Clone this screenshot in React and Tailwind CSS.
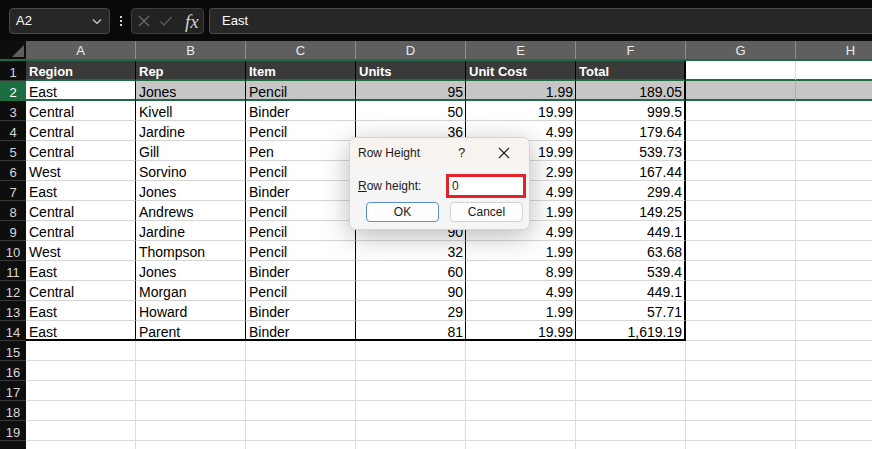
import React from "react";

const cols = ["A", "B", "C", "D", "E", "F", "G", "H"];
const data = [
  ["East", "Jones", "Pencil", "95", "1.99", "189.05"],
  ["Central", "Kivell", "Binder", "50", "19.99", "999.5"],
  ["Central", "Jardine", "Pencil", "36", "4.99", "179.64"],
  ["Central", "Gill", "Pen", "27", "19.99", "539.73"],
  ["West", "Sorvino", "Pencil", "56", "2.99", "167.44"],
  ["East", "Jones", "Binder", "60", "4.99", "299.4"],
  ["Central", "Andrews", "Pencil", "75", "1.99", "149.25"],
  ["Central", "Jardine", "Pencil", "90", "4.99", "449.1"],
  ["West", "Thompson", "Pencil", "32", "1.99", "63.68"],
  ["East", "Jones", "Binder", "60", "8.99", "539.4"],
  ["Central", "Morgan", "Pencil", "90", "4.99", "449.1"],
  ["East", "Howard", "Binder", "29", "1.99", "57.71"],
  ["East", "Parent", "Binder", "81", "19.99", "1,619.19"],
];
const headers = ["Region", "Rep", "Item", "Units", "Unit Cost", "Total"];

const font = { fontFamily: "'Liberation Sans', Arial, sans-serif" };

function RowHeader({ n, active }) {
  return (
    <div
      className={
        "w-[26px] shrink-0 flex items-center justify-center pt-[3px] text-[13px] leading-[15px] border-b " +
        (active
          ? "bg-[#1e6c41] text-white border-[#1e6c41]"
          : "bg-[#0e0e0e] text-[#d8d8d8] border-[#3a3a3a]")
      }
    >
      {n}
    </div>
  );
}

function TopBar() {
  return (
    <div className="h-[41px] bg-[#0a0a0a] flex items-start pt-[8px] pl-[9px]">
      <div className="w-[101px] h-[26px] rounded-[4px] border border-[#484848] bg-[#272727] flex items-center justify-between pl-[6px] pr-[6px]">
        <span className="text-white text-[13px]">A2</span>
        <svg width="12" height="12" viewBox="0 0 12 12">
          <path d="M2 4.5 L6 8.5 L10 4.5" stroke="#cfcfcf" strokeWidth="1.2" fill="none" />
        </svg>
      </div>
      <div className="w-[21px] h-[26px] flex flex-col items-center justify-center gap-[2px]">
        <div className="w-[2px] h-[2px] bg-[#d0d0d0]" />
        <div className="w-[2px] h-[2px] bg-[#d0d0d0]" />
        <div className="w-[2px] h-[2px] bg-[#d0d0d0]" />
      </div>
      <div className="w-[73px] h-[26px] rounded-[4px] border border-[#3e3e3e] bg-[#222222] flex items-center pl-[5px] gap-[8px]">
        <svg width="14" height="14" viewBox="0 0 14 14">
          <path d="M2 2 L12 12 M12 2 L2 12" stroke="#6e6e6e" strokeWidth="1.3" />
        </svg>
        <svg width="14" height="14" viewBox="0 0 14 14">
          <path d="M1.5 7.5 L5 11 L12.5 3" stroke="#5a5a5a" strokeWidth="1.3" fill="none" />
        </svg>
        <span
          className="text-[#cfcfcf] text-[19px] italic ml-[4px] leading-none"
          style={{ fontFamily: "'Liberation Serif', 'Times New Roman', serif" }}
        >
          fx
        </span>
      </div>
      <div className="ml-[5px] flex-1 h-[26px] rounded-l-[4px] border border-r-0 border-[#4a4a4a] bg-[#272727] flex items-center pl-[12px]">
        <span className="text-white text-[13px]">East</span>
      </div>
    </div>
  );
}

function ColumnHeader() {
  return (
    <div className="h-[20px] flex border-b-2 border-[#1f6b45] bg-[#0e0e0e]">
      <div className="w-[26px] shrink-0 relative bg-[#0e0e0e]">
        <svg className="absolute right-[2px] bottom-[2px]" width="12" height="12" viewBox="0 0 12 12">
          <path d="M12 0 L12 12 L0 12 Z" fill="#5e5e5e" />
        </svg>
      </div>
      {cols.map((c) => (
        <div
          key={c}
          className="w-[110px] shrink-0 bg-[#5f5f5f] border-r border-[#8e8e8e] flex items-center justify-center pt-[1px] text-[13px] text-[#ececec]"
        >
          {c}
        </div>
      ))}
    </div>
  );
}

function Cell({ children, right, className }) {
  return (
    <div
      className={
        "w-[110px] shrink-0 flex items-center pt-[3px] leading-[16px] overflow-hidden whitespace-nowrap " +
        (right ? "justify-end pr-[2px] " : "pl-[3px] ") +
        className
      }
    >
      {children}
    </div>
  );
}

export default function App() {
  return (
    <div className="w-[872px] h-[449px] overflow-hidden bg-white relative" style={font}>
      <TopBar />
      <ColumnHeader />
      {/* Row 1 */}
      <div className="h-[20px] flex">
        <RowHeader n={1} />
        {headers.map((h, i) => (
          <Cell
            key={h}
            className={
              "bg-[#3a3a3a] text-white text-[13px] font-bold border-b-2 border-b-[#1f6b45] border-r border-r-black " +
              (i === 5 ? "border-r-2" : "")
            }
          >
            {h}
          </Cell>
        ))}
        <Cell className="border-b-2 border-b-[#1f6b45] border-r border-r-[#dcdcdc]" />
        <Cell className="border-b-2 border-b-[#1f6b45] border-r border-r-[#dcdcdc]" />
      </div>
      {data.map((row, ri) => {
        const n = ri + 2;
        const active = n === 2;
        const last = n === 14;
        return (
          <div key={n} className="h-[20px] flex">
            <RowHeader n={n} active={active} />
            {row.map((v, ci) => {
              let cls = "text-black text-[14px] border-r border-r-black ";
              if (ci === 5) cls += "border-r-2 ";
              if (active) {
                cls += "border-b-2 border-b-[#1f6b45] ";
                cls += ci === 0 ? "bg-white " : "bg-[#c6c6c6] ";
              } else if (last) {
                cls += "border-b-2 border-b-black ";
              } else {
                cls += "border-b border-b-[#d6d6d6] ";
              }
              return (
                <Cell key={ci} right={ci >= 3} className={cls}>
                  {v}
                </Cell>
              );
            })}
            {[0, 1].map((k) => (
              <Cell
                key={"e" + k}
                className={
                  active
                    ? "bg-[#c6c6c6] border-b-2 border-b-[#1f6b45] border-r border-r-[#adadad]"
                    : "border-b border-b-[#dcdcdc] border-r border-r-[#dcdcdc]"
                }
              />
            ))}
          </div>
        );
      })}
      {[15, 16, 17, 18, 19, 20].map((n) => (
        <div key={n} className="h-[20px] flex">
          <RowHeader n={n === 20 ? "" : n} />
          {cols.map((c) => (
            <Cell key={c} className="border-b border-b-[#dcdcdc] border-r border-r-[#dcdcdc]" />
          ))}
        </div>
      ))}

      {/* Dialog */}
      <div className="absolute left-[349px] top-[137px] w-[181px] h-[93px] rounded-[7px] border border-[#d4d4d4] bg-[#f5f5f5] overflow-hidden shadow-[0_6px_28px_rgba(0,0,0,0.28)] flex flex-col">
        <div className="h-[30px] bg-[#f8f3ee] flex items-center pl-[8px] text-[12px] text-[#1b1b1b]">
          <span className="w-[100px]">Row Height</span>
          <span className="text-[13px]">?</span>
          <svg className="ml-[33px]" width="12" height="12" viewBox="0 0 12 12">
            <path d="M1 1 L11 11 M11 1 L1 11" stroke="#222" strokeWidth="1.1" />
          </svg>
        </div>
        <div className="flex items-center pl-[8px] mt-[6px] text-[12px] text-[#1b1b1b]">
          <span className="w-[88px]">
            <span className="underline">R</span>ow height:
          </span>
          <div className="w-[80px] h-[24px] border-[3px] border-[#e3222c] bg-white flex items-center pl-[3px] text-[12px]">
            0
          </div>
        </div>
        <div className="flex pl-[16px] gap-[11px] mt-[4px] text-[12px] text-[#1b1b1b]">
          <div className="w-[73px] h-[20px] rounded-[4px] border border-[#5a8fd0] bg-[#fdfdfd] flex items-center justify-center">
            OK
          </div>
          <div className="w-[73px] h-[20px] rounded-[4px] border border-[#d2d2d2] bg-[#fdfdfd] flex items-center justify-center">
            Cancel
          </div>
        </div>
      </div>
    </div>
  );
}
